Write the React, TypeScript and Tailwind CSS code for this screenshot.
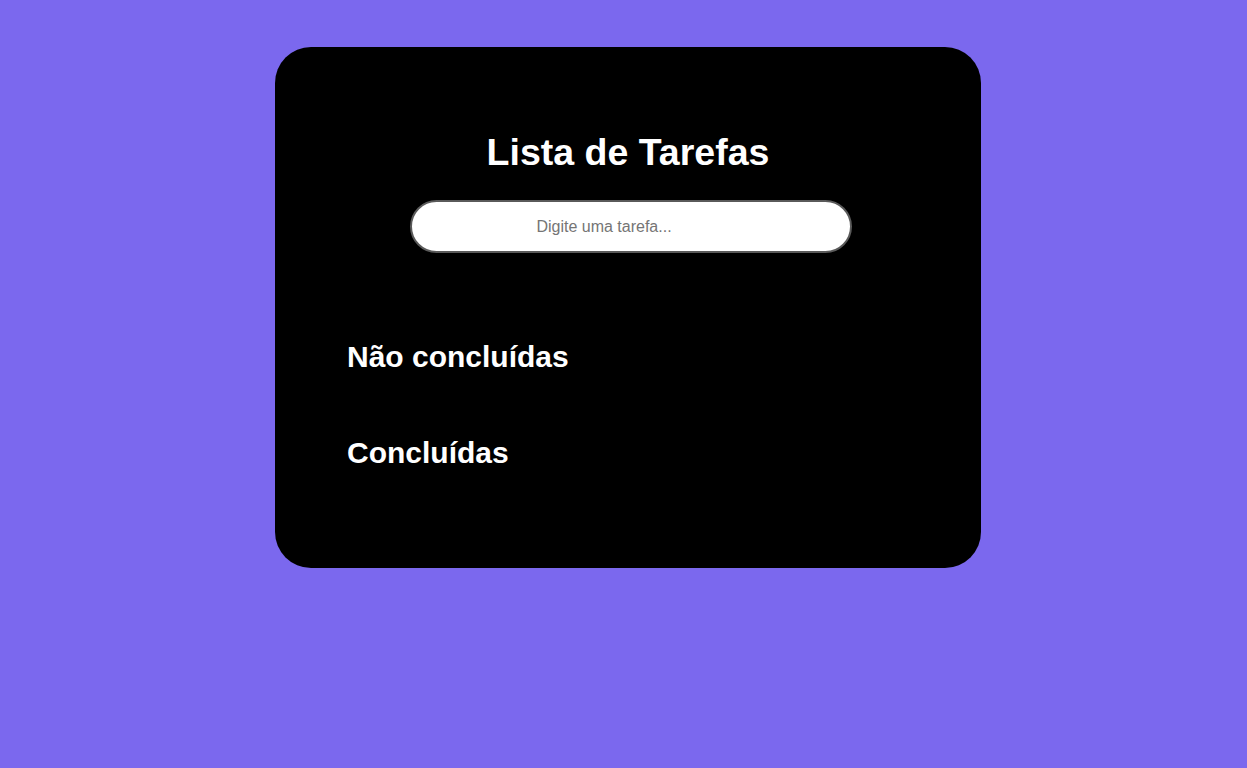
import React from "react";

export default function App() {
  return (
    <div
      className="min-h-[768px] w-full bg-[#7b68ee] pt-[47px] pl-[9px] flex justify-center items-start"
      style={{ fontFamily: '"Liberation Sans", Arial, sans-serif' }}
    >
      <div className="w-[706px] h-[521px] bg-black rounded-[36px] flex flex-col pt-[84px]">
        <h1 className="text-white font-bold text-[37.5px] leading-[42px] text-center">
          Lista de Tarefas
        </h1>
        <input
          type="text"
          placeholder="Digite uma tarefa..."
          className="mt-[27px] ml-[135px] w-[442px] h-[53px] rounded-full bg-white border-2 border-[#5a5a5a] text-[16px] text-center pl-[10px] pr-[64px] placeholder:text-[#757575] outline-none"
        />
        <h2 className="mt-[87px] ml-[72px] text-white font-bold text-[30px] leading-[34px]">
          Não concluídas
        </h2>
        <h2 className="mt-[62px] ml-[72px] text-white font-bold text-[30px] leading-[34px]">
          Concluídas
        </h2>
      </div>
    </div>
  );
}
